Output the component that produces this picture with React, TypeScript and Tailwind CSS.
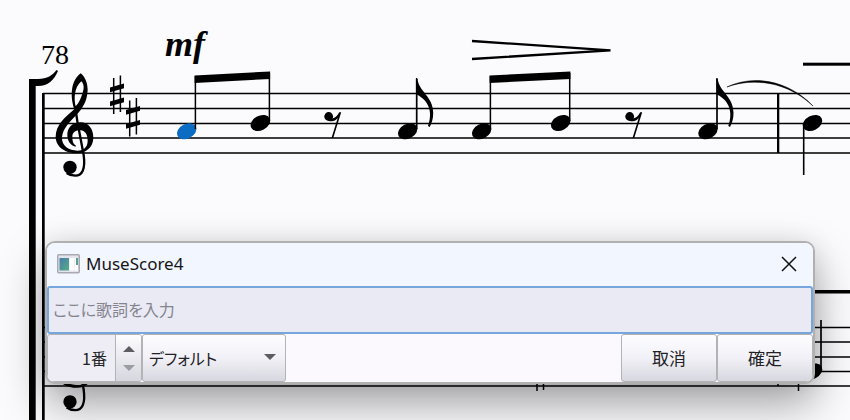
import React from "react";

const UPPER = [93.5, 108.5, 123.5, 138, 153];
const LOWER = [327.5, 342, 357, 371.5, 386];

function Head({ x, y, color = "#000" }: { x: number; y: number; color?: string }) {
  return <ellipse cx={x} cy={y} rx={10.3} ry={7.3} fill={color} transform={`rotate(-27 ${x} ${y})`} />;
}

function Clef({ y }: { y: number }) {
  return (
    <g transform={`translate(40 ${y}) scale(0.3333)`}>
      <path
        fillRule="evenodd"
        d="M103 148C90 110 92 62 122 40C136 52 143 70 143 90C142 124 126 148 109 165C90 185 69 204 66 232C64 258 88 272 112 272C130 272 143 262 143 242C143 222 134 212 122 211C106 210 97 218 97 230C97 245 100 252 108 257L106 260C92 256 82 244 82 225C82 203 97 187 122 187C146 187 161 208 160 235C159 262 138 280 112 280C78 280 47 262 47 230C47 195 75 172 103 148ZM107 139C101 115 103 82 124 64C132 72 133 85 128 98C124 112 117 128 107 139Z"
      />
      <path d="M105 138L113 190L131 285C137 328 126 347 106 347C96 347 88 345 80 339" fill="none" stroke="#000" strokeWidth={7} />
      <circle cx={90} cy={322} r={20} />
    </g>
  );
}

function Sharp({ x, y }: { x: number; y: number }) {
  return (
    <g transform={`translate(${x} ${y})`}>
      <path d="M3.7 2.5V38.5M10.4 0V36.5" stroke="#000" strokeWidth={1.5} />
      <path d="M0 12L14 8V12.7L0 16.7ZM0 26L14 22V26.7L0 30.7Z" />
    </g>
  );
}

function Pair({ x, gap, color }: { x: number; gap: number; color?: string }) {
  return (
    <g transform={`translate(${x} 0)`}>
      <Head x={0} y={131.3} color={color} />
      <Head x={gap} y={123} />
      <path d={`M8.7 76V129M${gap + 9} 73V121`} stroke="#000" strokeWidth={1.5} />
      <path d={`M7.9 75.5L${gap + 9.7} 71.5V79L7.9 83Z`} />
    </g>
  );
}

function Eighth({ x }: { x: number }) {
  return (
    <g transform={`translate(${x} 0)`}>
      <Head x={0} y={131.3} />
      <path d="M9 79V129" stroke="#000" strokeWidth={1.7} />
      <path d="M8.2 78H9.5C11 92 25.500 96 25.500 113C25.500 119 24 123 22 127L20.300 126C25 113 22 101 9 94.500Z" />
    </g>
  );
}

function Rest({ x }: { x: number }) {
  return (
    <g transform={`translate(${x} 0)`}>
      <circle cx={0} cy={116.5} r={4.4} />
      <path d="M1 118.500C6 119 8.500 116 10.500 112.300H12.500L4.500 138H2.800L9 118C6.500 121 4 122 0 120.900Z" />
    </g>
  );
}

function Score() {
  return (
    <svg width="100%" height="420" className="block" role="img" aria-label="Score">
      <path stroke="#000" strokeWidth={1.5} d={UPPER.map((y) => `M43 ${y}H4000`).join("")} />
      <path stroke="#000" strokeWidth={1.5} d={LOWER.map((y) => `M43 ${y}H4000`).join("")} />
      <rect x={29} y={79} width={6.7} height={341} />
      <path d="M29 79H38C47 79 53 75 56.500 70L58 71C54 80 48 86 38 86H29Z" />
      <rect x={42} y={93} width={2.7} height={327} />
      <text x={41} y={64} fontSize={28} className="font-['Liberation_Serif',serif]">78</text>
      <text x={165} y={56} fontSize={36} className="font-['Liberation_Serif',serif] font-bold italic">mf</text>
      <Clef y={60} />
      <Clef y={294.5} />
      <Sharp x={110} y={75.5} />
      <Sharp x={126} y={98} />
      <Pair x={186.7} gap={73.7} color="#0b6cc4" />
      <Rest x={328.7} />
      <Eighth x={407.7} />
      <Pair x={481.7} gap={79} />
      <Rest x={629.7} />
      <Eighth x={708} />
      <path d="M472 41L610.5 50.3L472 59" fill="none" stroke="#000" strokeWidth={2.3} strokeLinejoin="bevel" />
      <rect x={777} y={93} width={2.3} height={60} />
      <path d="M727 87C752 75 787 79 813 106C788 82 754 77 727 87Z" stroke="#000" strokeWidth={0.5} />
      <Head x={812.5} y={123} />
      <path d="M803.7 124V175" stroke="#000" strokeWidth={1.6} />
      <rect x={803} y={62.7} width={4000} height={3} />
      <rect x={803} y={290} width={4000} height={3.5} />
      <path d="M821 320V372" stroke="#000" strokeWidth={1.7} />
      <Head x={812.5} y={371.5} />
      <path d="M537 381V391M543.5 381V390M778 381V386M798.5 381V391" stroke="#000" strokeWidth={1.5} />
    </svg>
  );
}

const raised = "border border-[#b3b2b5] rounded-[3px] bg-linear-to-b from-[#fdfcff] via-[#f2f1f7] to-[#d6d7df]";

export default function App() {
  return (
    <main className="relative min-h-screen overflow-hidden bg-[#fbfafd] font-['Noto_Sans_CJK_JP',sans-serif] text-base text-[#222226]">
      <Score />
      <section
        aria-label="MuseScore4"
        className="absolute top-[241px] right-[35px] left-[45px] overflow-hidden rounded-[10px] border-2 border-[#b1b0b1] bg-[#fbf9fd] shadow-[0_20px_44px_rgba(0,0,0,0.36),0_0_24px_rgba(0,0,0,0.08)]"
      >
        <header className="flex h-[43px] items-center gap-1.5 bg-[#f2f6fe] pr-4 pb-0.5 pl-2.5">
          <svg width="23" height="20" viewBox="0 0 23 20" aria-hidden="true">
            <defs>
              <linearGradient id="pane" x1="0" y1="0" x2="1" y2="1">
                <stop offset="0" stopColor="#4a7bab" />
                <stop offset="1" stopColor="#55ad85" />
              </linearGradient>
            </defs>
            <rect x=".75" y=".75" width="21.5" height="18" rx="1" fill="#e4e4ec" stroke="#aaa9b1" strokeWidth="1.5" />
            <rect x="2.5" y="4" width="9.5" height="12.5" fill="url(#pane)" />
            <rect x="12.5" y="4" width="5" height="12.5" fill="#fff" />
            <rect x="18" y="4" width="3" height="12.5" fill="#fff" />
            <rect x="19" y="4" width="2" height="7" fill="#55a391" />
          </svg>
          <h1 className="grow font-['Noto_Sans',sans-serif] text-[17px] text-[#151518]">MuseScore4</h1>
          <button aria-label="閉じる">
            <svg width="16" height="16" viewBox="0 0 16 16" className="block">
              <path d="M1 1L15 15M15 1L1 15" stroke="#111" strokeWidth="1.5" />
            </svg>
          </button>
        </header>
        <input
          aria-label="歌詞"
          placeholder="ここに歌詞を入力"
          className="block h-12 w-full rounded-[3px] border-2 border-[#75a6dc] bg-[#e9eaf4] px-1 pb-0.5 text-base outline-none [font-feature-settings:'palt'] placeholder:text-[#85848e]"
        />
        <div className="flex h-12">
          <div className="flex w-[95px] overflow-hidden rounded-[3px] border border-[#b3b2b5] bg-[#eeedf5]">
            <input aria-label="番号" defaultValue="1番" className="w-0 grow bg-transparent pr-2 text-right text-base outline-none" />
            <div className="flex w-[26px] flex-col border-l border-[#b3b2b5] bg-linear-to-b from-[#fdfcff] to-[#d6d7df]">
              <button aria-label="増やす" className="flex grow items-center justify-center pt-1">
                <svg width="12" height="6" viewBox="0 0 12 6"><path d="M0 6L6 0L12 6Z" fill="#5d5d60" /></svg>
              </button>
              <button aria-label="減らす" className="flex grow items-center justify-center pb-1">
                <svg width="12" height="6" viewBox="0 0 12 6"><path d="M0 0L6 6L12 0Z" fill="#9b9ba2" /></svg>
              </button>
            </div>
          </div>
          <div className="relative w-36">
            <select aria-label="スタイル" className={`${raised} h-full w-full appearance-none pl-1.5 text-base [font-feature-settings:'palt']`}>
              <option>デフォルト</option>
            </select>
            <svg width="12" height="6" viewBox="0 0 12 6" className="pointer-events-none absolute top-5 right-2.5"><path d="M0 0L6 6L12 0Z" fill="#5d5d60" /></svg>
          </div>
          <div className="grow" />
          <button className={`${raised} w-24 text-[17px]`}>取消</button>
          <button className={`${raised} w-24 text-[17px]`}>確定</button>
        </div>
      </section>
    </main>
  );
}
